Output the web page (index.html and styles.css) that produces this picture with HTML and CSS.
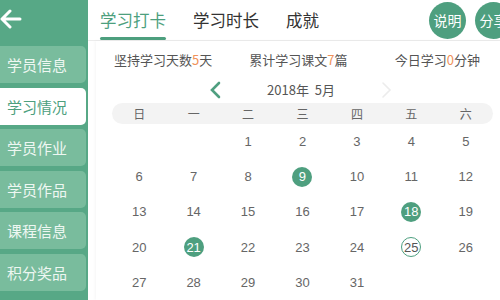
FILE: index.html
```html
<!DOCTYPE html>
<html lang="zh">
<head>
    <meta charset="UTF-8">
    <meta name="viewport" content="width=device-width, initial-scale=1.0">
    <title>学习情况</title>
    <link rel="stylesheet" href="styles.css">
</head>
<body>
    <div class="page">
        <div class="sidebar">
            <div class="back">
                <svg width="22" height="22" viewBox="0 0 22 22">
                    <path d="M20 11H2M10 3L2 11L10 19" fill="none" stroke="#fff" stroke-width="3" stroke-linecap="round" stroke-linejoin="round"/>
                </svg>
            </div>
            <div class="menu">
                <div class="menu-item">学员信息</div>
                <div class="menu-item active">学习情况</div>
                <div class="menu-item">学员作业</div>
                <div class="menu-item">学员作品</div>
                <div class="menu-item">课程信息</div>
                <div class="menu-item">积分奖品</div>
            </div>
        </div>

        <div class="main">
            <div class="tabs">
                <div class="tab active">学习打卡</div>
                <div class="tab">学习时长</div>
                <div class="tab">成就</div>
                <div class="tab-actions">
                    <div class="round-btn">说明</div>
                    <div class="round-btn">分享</div>
                </div>
            </div>

            <div class="card">
                <div class="stats">
                    <span>坚持学习天数<em>5</em>天</span>
                    <span>累计学习课文<em>7</em>篇</span>
                    <span class="last">今日学习<em>0</em>分钟</span>
                </div>

                <div class="month">
                    <svg class="chev" width="14" height="18" viewBox="0 0 14 18">
                        <path d="M11 2L4 9L11 16" fill="none" stroke="#4f9f80" stroke-width="2.6" stroke-linecap="round"/>
                    </svg>
                    <span class="month-text">2018年&nbsp;&nbsp;5月</span>
                    <svg class="chev" width="14" height="18" viewBox="0 0 14 18">
                        <path d="M3 2L10 9L3 16" fill="none" stroke="#ececec" stroke-width="1.6" stroke-linecap="round"/>
                    </svg>
                </div>

                <div class="calendar">
                    <div class="weekdays">
                        <span>日</span><span>一</span><span>二</span><span>三</span><span>四</span><span>五</span><span>六</span>
                    </div>
                    <div class="days">
                        <span></span><span></span>
                        <span>1</span><span>2</span><span>3</span><span>4</span><span>5</span>
                        <span>6</span><span>7</span><span>8</span><span><b class="done">9</b></span><span>10</span><span>11</span><span>12</span>
                        <span>13</span><span>14</span><span>15</span><span>16</span><span>17</span><span><b class="done">18</b></span><span>19</span>
                        <span>20</span><span><b class="done">21</b></span><span>22</span><span>23</span><span>24</span><span><b class="today">25</b></span><span>26</span>
                        <span>27</span><span>28</span><span>29</span><span>30</span><span>31</span>
                    </div>
                </div>
            </div>
        </div>
    </div>
</body>
</html>
```

FILE: styles.css
```css
body {
    margin: 0;
    font-family: "Noto Sans CJK SC", "Liberation Sans", sans-serif;
    background: #fff;
    overflow: hidden;
}
.page {
    display: flex;
    width: 500px;
    height: 300px;
}
.sidebar {
    width: 88px;
    flex-shrink: 0;
    background: #57a886;
}
.back {
    height: 45px;
    display: flex;
    align-items: center;
    margin-top: -4px;
}
.menu {
    display: flex;
    flex-direction: column;
    gap: 4.6px;
    padding-top: 5px;
}
.menu-item {
    width: 86px;
    height: 37px;
    box-sizing: border-box;
    background: #79bc9d;
    border-radius: 0 5px 5px 0;
    color: #eef7f2;
    font-size: 15px;
    line-height: 37px;
    padding-left: 7px;
}
.menu-item.active {
    background: #fff;
    color: #4d9f7e;
}
.main {
    flex: 1;
    display: flex;
    flex-direction: column;
    min-width: 0;
}
.tabs {
    height: 41px;
    display: flex;
    align-items: stretch;
    padding-left: 12px;
    gap: 27px;
    border-bottom: 1px solid #ececec;
    box-sizing: border-box;
}
.tab {
    font-size: 16.5px;
    color: #333;
    line-height: 40px;
    position: relative;
}
.tab.active {
    color: #4d9f7e;
}
.tab.active::after {
    content: "";
    position: absolute;
    left: 0;
    right: 0;
    bottom: 0;
    height: 3px;
    background: #4d9f7e;
    border-radius: 2px;
}
.tab-actions {
    margin-left: auto;
    display: flex;
    gap: 9px;
    align-items: center;
    margin-right: -12px;
}
.round-btn {
    width: 37px;
    height: 37px;
    flex-shrink: 0;
    border-radius: 50%;
    background: #4e9f7f;
    color: #fff;
    font-size: 14px;
    display: flex;
    align-items: center;
    justify-content: center;
    white-space: nowrap;
}
.card {
    flex: 1;
    margin-left: 8px;
    box-shadow: -1px 0 3px rgba(0, 0, 0, 0.04);
}
.stats {
    display: flex;
    gap: 37px;
    padding: 0 20px 0 18px;
    height: 36px;
    align-items: center;
    font-size: 13px;
    color: #555;
}
.stats .last {
    margin-left: auto;
}
.stats em {
    font-style: normal;
    color: #f0925a;
}
.month {
    display: flex;
    justify-content: center;
    align-items: center;
    height: 25px;
    padding-left: 6px;
}
.month-text {
    font-size: 13px;
    color: #555;
    width: 158px;
    text-align: center;
}
.calendar {
    margin: 1px 7px 0 16px;
}
.weekdays {
    display: grid;
    grid-template-columns: repeat(7, 1fr);
    background: #f3f3f3;
    border-radius: 11px;
    height: 21px;
    align-items: center;
    font-size: 12px;
    color: #666;
    text-align: center;
}
.days {
    display: grid;
    grid-template-columns: repeat(7, 1fr);
    grid-auto-rows: 35.2px;
    font-family: "Liberation Sans", sans-serif;
    font-size: 13px;
    color: #666;
}
.days span {
    display: flex;
    align-items: center;
    justify-content: center;
}
.days b {
    font-weight: normal;
    width: 20px;
    height: 20px;
    border-radius: 50%;
    display: flex;
    align-items: center;
    justify-content: center;
    box-sizing: border-box;
}
.days .done {
    background: #4e9f7f;
    color: #fff;
}
.days .today {
    border: 1px solid #4e9f7f;
    color: #555;
}
```
